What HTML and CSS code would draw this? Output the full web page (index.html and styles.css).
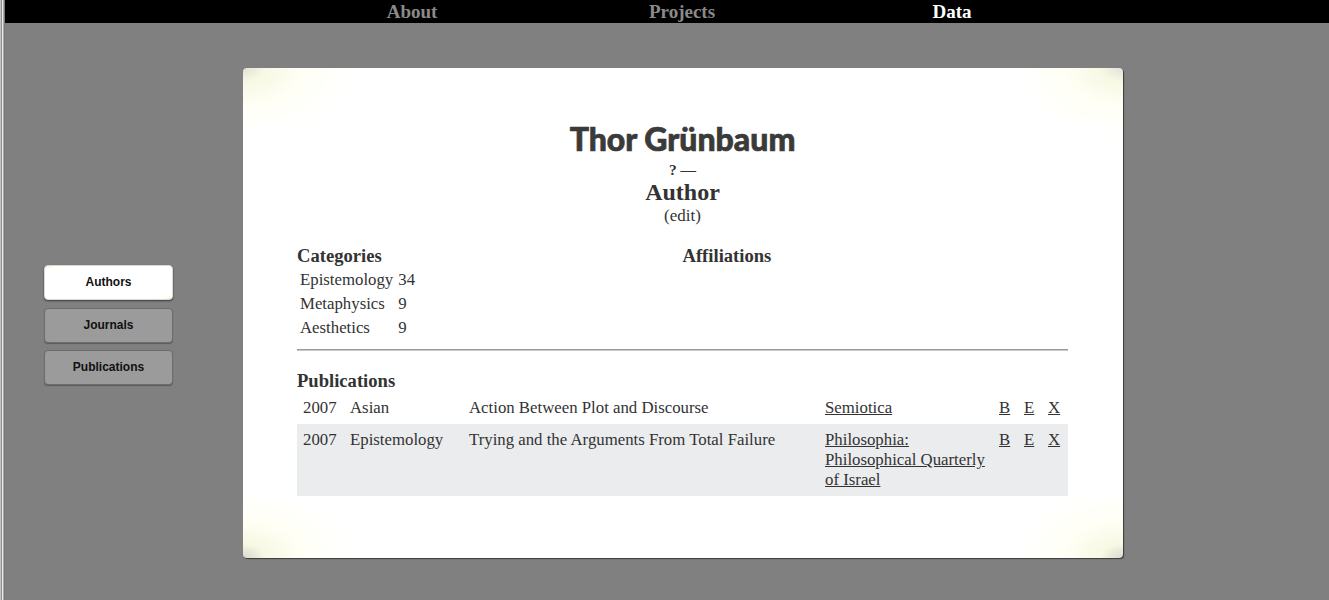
FILE: index.html
```html
<!DOCTYPE html>
<html lang="en">
<head>
<meta charset="utf-8">
<title>Thor Grünbaum</title>
<link rel="stylesheet" href="styles.css">
</head>
<body>
<div class="frame">
  <nav class="topbar">
    <div class="nav-inner">
      <a class="nav-item" href="#">About</a>
      <a class="nav-item" href="#">Projects</a>
      <a class="nav-item active" href="#">Data</a>
    </div>
  </nav>
  <div class="main">
    <aside class="sidebar">
      <a class="side-btn active" href="#">Authors</a>
      <a class="side-btn" href="#">Journals</a>
      <a class="side-btn" href="#">Publications</a>
    </aside>
    <section class="card">
      <header class="head">
        <h1 class="name">Thor Grünbaum</h1>
        <div class="dates">? —</div>
        <div class="role">Author</div>
        <div class="edit">(edit)</div>
      </header>
      <div class="two-col">
        <div class="col">
          <h2 class="sec">Categories</h2>
          <table class="cats">
            <tr><td>Epistemology</td><td>34</td></tr>
            <tr><td>Metaphysics</td><td>9</td></tr>
            <tr><td>Aesthetics</td><td>9</td></tr>
          </table>
        </div>
        <div class="col">
          <h2 class="sec">Affiliations</h2>
        </div>
      </div>
      <hr class="rule">
      <h2 class="sec pubs-title">Publications</h2>
      <table class="pubs">
        <colgroup>
          <col class="c-year"><col class="c-cat"><col class="c-title"><col class="c-journal"><col class="c-b"><col class="c-e"><col class="c-x">
        </colgroup>
        <tr>
          <td>2007</td><td>Asian</td><td>Action Between Plot and Discourse</td>
          <td><a href="#">Semiotica</a></td>
          <td><a href="#">B</a></td><td><a href="#">E</a></td><td><a href="#">X</a></td>
        </tr>
        <tr class="alt">
          <td>2007</td><td>Epistemology</td><td>Trying and the Arguments From Total Failure</td>
          <td><a href="#">Philosophia: Philosophical Quarterly of Israel</a></td>
          <td><a href="#">B</a></td><td><a href="#">E</a></td><td><a href="#">X</a></td>
        </tr>
      </table>
    </section>
  </div>
</div>
</body>
</html>
```

FILE: styles.css
```css
html {
  background: linear-gradient(to right, #c4c4c4 0, #c4c4c4 1px, #8e8e8e 1px, #8e8e8e 2px, #ececec 2px, #ececec 3px, #a8a8a8 3px, #a8a8a8 4px, #7a7a7a 4px, #7a7a7a 5px, #808080 5px);
  min-height: 100%;
}
body {
  margin: 0;
  padding-left: 5px;
  font-family: "Liberation Serif", serif;
  color: #333;
  min-height: 600px;
}
.frame {
  background: #808080;
  min-height: 600px;
}
.topbar {
  background: #000;
  height: 23px;
}
.nav-inner {
  display: flex;
  margin-left: 272px;
  width: 810px;
}
.nav-item {
  flex: 1;
  text-align: center;
  font-weight: bold;
  font-size: 19px;
  line-height: 24px;
  height: 23px;
  color: #8a8a8a;
  text-decoration: none;
}
.nav-item.active { color: #fff; }

.main {
  display: flex;
  align-items: flex-start;
  padding-top: 45px;
  padding-left: 39px;
}
.sidebar {
  width: 129px;
  margin-top: 197px;
  display: flex;
  flex-direction: column;
  gap: 7px;
}
.side-btn {
  display: block;
  height: 35px;
  line-height: 33px;
  box-sizing: border-box;
  text-align: center;
  font-family: "Liberation Sans", "DejaVu Sans", sans-serif;
  font-weight: bold;
  font-size: 12px;
  color: #111;
  text-decoration: none;
  background: #9b9b9b;
  border: 1px solid #6c6c6c;
  border-radius: 4px;
  box-shadow: 0 1px 1px #5a5a5a;
}
.side-btn.active {
  background:
    radial-gradient(ellipse at 0 0, rgba(236,236,214,1) 0, rgba(255,255,236,0.6) 9px, rgba(255,255,255,0) 20px),
    radial-gradient(ellipse at 100% 100%, rgba(236,236,214,1) 0, rgba(255,255,236,0.6) 9px, rgba(255,255,255,0) 20px),
    #fff;
  border-color: #d8d8d8;
  box-shadow: 0 1px 2px #3c3c3c;
  margin-bottom: 1px;
}

.card {
  margin-left: 70px;
  width: 880px;
  height: 490px;
  box-sizing: border-box;
  padding: 52px 55px 0 54px;
  border-radius: 4px;
  background:
    radial-gradient(ellipse 110px 70px at 0 0, #e2e2da 0, #f8f8e4 20%, rgba(255,255,240,0.6) 55%, rgba(255,255,255,0) 100%),
    radial-gradient(ellipse 110px 70px at 100% 0, #e2e2da 0, #f8f8e4 20%, rgba(255,255,240,0.6) 55%, rgba(255,255,255,0) 100%),
    radial-gradient(ellipse 110px 70px at 0 100%, #d8d8d0 0, #f8f8e4 20%, rgba(255,255,240,0.6) 55%, rgba(255,255,255,0) 100%),
    radial-gradient(ellipse 110px 70px at 100% 100%, #d8d8d0 0, #f8f8e4 20%, rgba(255,255,240,0.6) 55%, rgba(255,255,255,0) 100%),
    #fff;
  box-shadow: 1px 1px 1px #3a3a3a;
}
.head { text-align: center; }
.name {
  margin: 0;
  font-family: "Lato", "Open Sans", sans-serif;
  font-weight: 900;
  font-size: 32px;
  line-height: 38px;
  color: #3a3a3a;
  -webkit-text-stroke: 0.7px #3a3a3a;
}
.dates {
  font-weight: bold;
  font-size: 15.5px;
  line-height: 18px;
  margin-top: 3px;
}
.role {
  font-weight: bold;
  font-size: 24px;
  line-height: 27px;
}
.edit {
  font-size: 17px;
  line-height: 20px;
}
.two-col {
  display: flex;
  margin-top: 19px;
}
.col { flex: 1; }
.sec {
  margin: 0;
  font-size: 18.6px;
  line-height: 22px;
  font-weight: bold;
}
.cats {
  border-collapse: separate;
  border-spacing: 1px 0;
  font-size: 16.8px;
  margin-top: 1px;
}
.cats td {
  padding: 2px 2px;
  line-height: 20px;
}
.rule {
  margin: 9px 0 0;
  border: 0;
  border-top: 1px solid #999;
  border-bottom: 1px solid #c8c8c8;
  height: 0;
}
.pubs-title { margin-top: 19px; }
.pubs {
  width: 771px;
  table-layout: fixed;
  border-collapse: collapse;
  font-size: 16.8px;
}
.pubs td {
  padding: 6px;
  line-height: 20px;
  vertical-align: top;
}
.pubs .alt td { background: #ebecee; }
.pubs a { color: #333; }
.c-year { width: 47px; }
.c-cat { width: 119px; }
.c-title { width: 356px; }
.c-journal { width: 174px; }
.c-b { width: 25px; }
.c-e { width: 24px; }
.c-x { width: 26px; }
```
